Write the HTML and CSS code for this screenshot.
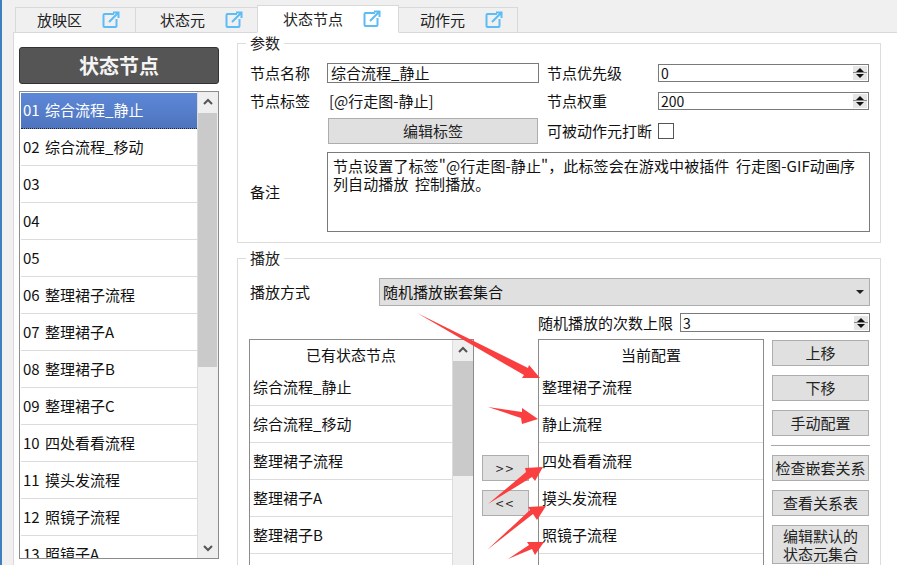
FILE: index.html
```html
<!DOCTYPE html>
<html lang="zh">
<head>
<meta charset="utf-8">
<title>状态节点</title>
<link rel="stylesheet" href="styles.css">
</head>
<body>
<div class="app">
  <nav class="tabs">
    <div class="tab t1"><span>放映区</span><svg class="ext" viewBox="0 0 18 18"><path d="M12 3H2.500A1 1 0 0 0 1.500 4v11a1 1 0 0 0 1 1h11a1 1 0 0 0 1-1V8M7 11 16 2M11 1.500h5.500V7" /></svg></div>
    <div class="tab t2"><span>状态元</span><svg class="ext" viewBox="0 0 18 18"><path d="M12 3H2.500A1 1 0 0 0 1.500 4v11a1 1 0 0 0 1 1h11a1 1 0 0 0 1-1V8M7 11 16 2M11 1.500h5.500V7" /></svg></div>
    <div class="tab active"><span>状态节点</span><svg class="ext" viewBox="0 0 18 18"><path d="M12 3H2.500A1 1 0 0 0 1.500 4v11a1 1 0 0 0 1 1h11a1 1 0 0 0 1-1V8M7 11 16 2M11 1.500h5.500V7" /></svg></div>
    <div class="tab t4"><span>动作元</span><svg class="ext" viewBox="0 0 18 18"><path d="M12 3H2.500A1 1 0 0 0 1.500 4v11a1 1 0 0 0 1 1h11a1 1 0 0 0 1-1V8M7 11 16 2M11 1.500h5.500V7" /></svg></div>
  </nav>
  <main class="panel">
    <aside class="side">
      <h1 class="title">状态节点</h1>
      <div class="list">
        <ul class="rows">
          <li class="sel">01 综合流程_静止</li>
          <li>02 综合流程_移动</li>
          <li>03</li>
          <li>04</li>
          <li>05</li>
          <li>06 整理裙子流程</li>
          <li>07 整理裙子A</li>
          <li>08 整理裙子B</li>
          <li>09 整理裙子C</li>
          <li>10 四处看看流程</li>
          <li>11 摸头发流程</li>
          <li>12 照镜子流程</li>
          <li>13 照镜子A</li>
        </ul>
        <div class="sbar">
          <div class="sup"><svg viewBox="0 0 12 8"><path d="M2 6 6 2l4 4"/></svg></div>
          <div class="thumb"></div>
          <div class="sdown"><svg viewBox="0 0 12 8"><path d="M2 2l4 4 4-4"/></svg></div>
        </div>
      </div>
    </aside>
    <div class="content">
      <section class="group params">
        <h2 class="legend">参数</h2>
        <div class="pgrid">
          <label class="lb">节点名称</label>
          <div class="field">综合流程_静止</div>
          <label class="lb">节点优先级</label>
          <div class="spin"><span>0</span><i class="arrows"><b class="u"></b><b class="d"></b></i></div>

          <label class="lb">节点标签</label>
          <div class="tagtext">[@行走图-静止]</div>
          <label class="lb">节点权重</label>
          <div class="spin"><span>200</span><i class="arrows"><b class="u"></b><b class="d"></b></i></div>

          <span></span>
          <div class="btn editbtn">编辑标签</div>
          <label class="lb">可被动作元打断</label>
          <i class="check"></i>
        </div>
        <div class="noteline">
          <label class="lb">备注</label>
          <div class="note">节点设置了标签"@行走图-静止"，此标签会在游戏中被插件 行走图-GIF动画序<br>列自动播放 控制播放。</div>
        </div>
      </section>
      <section class="group play">
        <h2 class="legend">播放</h2>
        <div class="modeline">
          <label class="lb">播放方式</label>
          <div class="combo"><span>随机播放嵌套集合</span><i class="caret"></i></div>
        </div>
        <div class="limitline">
          <label class="lb">随机播放的次数上限</label>
          <div class="spin lim"><span>3</span><i class="arrows"><b class="u"></b><b class="d"></b></i></div>
        </div>
        <div class="lists">
          <div class="box have">
            <div class="boxmain">
              <div class="head">已有状态节点</div>
              <ul class="rows small">
                <li>综合流程_静止</li>
                <li>综合流程_移动</li>
                <li>整理裙子流程</li>
                <li>整理裙子A</li>
                <li>整理裙子B</li>
              </ul>
            </div>
            <div class="sbar">
              <div class="sup"><svg viewBox="0 0 12 8"><path d="M2 6 6 2l4 4"/></svg></div>
              <div class="thumb t2"></div>
            </div>
          </div>
          <div class="mid">
            <div class="btn mbtn">&gt;&gt;</div>
            <div class="btn mbtn">&lt;&lt;</div>
          </div>
          <div class="box cur">
            <div class="boxmain">
              <div class="head">当前配置</div>
              <ul class="rows small">
                <li>整理裙子流程</li>
                <li>静止流程</li>
                <li>四处看看流程</li>
                <li>摸头发流程</li>
                <li>照镜子流程</li>
              </ul>
            </div>
          </div>
          <div class="acts">
            <div class="btn">上移</div>
            <div class="btn">下移</div>
            <div class="btn">手动配置</div>
            <hr class="sep">
            <div class="btn">检查嵌套关系</div>
            <div class="btn">查看关系表</div>
            <div class="btn tall">编辑默认的<br>状态元集合</div>
          </div>
        </div>
      </section>
    </div>
  </main>
  <svg class="marks" viewBox="0 0 897 565" aria-hidden="true">
    <polygon points="417,313 528,368 529,365 540,378 522,378 524,375"/>
    <polygon points="488,407 522,412 522,408 538,419 522,424 521,418"/>
    <polygon points="488,504 526,472 525,468 543,467 535,481 532,477"/>
    <polygon points="487,550 530,510 528,507 546,506 537,520 533,514"/>
    <polygon points="508,559 529,545 527,542 544,542 535,555 532,549"/>
  </svg>
</div>
</body>
</html>
```
FILE: styles.css
```css
* { box-sizing: border-box; }
html, body { margin: 0; padding: 0; }
body { background: #f0f0f0; font: 15px/20px "Noto Sans CJK SC", "Noto Sans", sans-serif; color: #111; overflow: hidden; }
.app { position: relative; width: 897px; height: 565px; overflow: hidden; border-left: 2px solid #3f7fc0; padding-left: 11px; }
ul { list-style: none; margin: 0; padding: 0; }
.tabs { position: relative; z-index: 1; display: flex; align-items: flex-end; height: 33px; padding-left: 2px; }
.tab { display: flex; align-items: center; height: 26px; background: #f0f0f0; border: 1px solid #d9d9d9; color: #222; }
.t1 { width: 121px; padding-left: 21px; }
.t2 { width: 123px; padding-left: 24px; margin-left: -1px; }
.t4 { width: 120px; padding-left: 21px; margin-left: -1px; }
.tab.active { width: 142px; height: 28px; background: #fff; border-bottom-color: #fff; padding-left: 25px; margin-left: -1px; position: relative; z-index: 1; }
.ext { width: 18px; height: 18px; margin-left: 20px; fill: none; stroke: #5cbcf5; stroke-width: 2; }
.panel { display: flex; background: #fff; height: 533px; margin-top: -1px; border-top: 1px solid #d9d9d9; border-left: 1px solid #d9d9d9; padding: 14px 0 0 5px; }
.side { width: 200px; flex: none; }
.title { margin: 0; height: 37px; background: #555; border: 1px solid #333; border-radius: 3px; color: #f4f4f4; font-size: 20px; line-height: 35px; font-weight: 700; text-align: center; }
.list { display: flex; height: 468px; margin-top: 7px; border: 1px solid #8c8c8c; padding-left: 1px; }
.list .rows { word-spacing: 2px; }
.rows { flex: 1; overflow: hidden; }
.rows li { height: 37px; line-height: 35px; padding-left: 2px; border-bottom: 1px solid #dcdcdc; white-space: nowrap; color: #111; }
.rows li.sel { height: 36px; margin-top: 1px; line-height: 34px; background: linear-gradient(#5d88d8, #4e74bd); color: #fff; border-bottom: 1px dotted #223; }
.sbar { display: flex; flex-direction: column; width: 21px; flex: none; background: #efefef; border-left: 1px solid #dcdcdc; }
.sup, .sdown { height: 20px; flex: none; display: flex; align-items: center; justify-content: center; }
.sup svg, .sdown svg { width: 12px; height: 8px; fill: none; stroke: #555; stroke-width: 2; }
.thumb { height: 254px; margin: 1px 1px 0 0; background: #cacaca; }
.thumb.t2 { height: 115px; }
.list .sdown { margin-top: auto; }
.content { margin-left: 18px; width: 644px; flex: none; }
.group { border: 1px solid #dcdcdc; position: relative; }
.params { height: 200px; margin-top: -4px; padding: 15px 0 0 12px; }
.play { height: 400px; margin-top: 15px; padding: 19px 0 0 12px; }
.legend { position: absolute; left: 8px; top: -11px; margin: 0; padding: 0 4px; background: #fff; font-size: 15px; font-weight: 400; line-height: 20px; color: #222; }
.lb { white-space: nowrap; color: #111; }
.pgrid { display: grid; grid-template-columns: 77px 220px 111px 211px; grid-template-rows: 28px 27px 34px; align-items: center; }
.field { width: 212px; height: 20px; line-height: 18px; border: 1px solid #7a7a7a; padding-left: 3px; }
.tagtext { padding-left: 2px; }
.spin { display: flex; align-items: center; justify-content: space-between; height: 18px; border: 1px solid #7a7a7a; padding-left: 2px; font-size: 14px; }
.arrows { display: flex; flex-direction: column; width: 14px; height: 14px; margin-right: 1px; background: linear-gradient(#e6e6e6 6px, #888 6px, #888 7px, #e6e6e6 7px); gap: 2px; justify-content: center; align-items: center; }
.arrows b { width: 0; height: 0; border-left: 4px solid transparent; border-right: 4px solid transparent; }
.arrows .u { border-bottom: 4px solid #111; }
.arrows .d { border-top: 4px solid #111; }
.btn { display: flex; align-items: center; justify-content: center; text-align: center; height: 26px; background: #e0e0e0; border: 1px solid #adadad; color: #222; }
.editbtn { width: 210px; margin-left: 1px; }
.check { width: 16px; height: 16px; border: 1px solid #555; background: #fff; }
.noteline { display: flex; align-items: center; margin-top: 4px; }
.noteline .lb { width: 77px; }
.note { width: 543px; height: 80px; border: 1px solid #7a7a7a; padding: 4px 5px; line-height: 18px; letter-spacing: 0.1px; word-spacing: 3px; white-space: nowrap; }
.modeline { display: flex; align-items: center; height: 28px; }
.modeline .lb { width: 129px; }
.combo { display: flex; align-items: center; justify-content: space-between; width: 491px; height: 28px; background: #e0e0e0; border: 1px solid #adadad; padding: 0 5px 0 3px; }
.caret { width: 0; height: 0; border-left: 4px solid transparent; border-right: 4px solid transparent; border-top: 4px solid #222; }
.limitline { display: flex; justify-content: flex-end; align-items: center; width: 620px; height: 19px; gap: 7px; margin-top: 7px; }
.lim { width: 190px; height: 19px; }
.lists { display: flex; margin: 7px 0 0 -1px; }
.box { display: flex; flex: none; border: 1px solid #8c8c8c; border-bottom: 0; height: 230px; overflow: hidden; }
.have { width: 225px; }
.cur { width: 226px; }
.boxmain { flex: 1; min-width: 0; }
.head { height: 29px; line-height: 30px; text-align: center; color: #111; }
.small li { padding-left: 3px; }
.mid { width: 64px; flex: none; display: flex; flex-direction: column; gap: 9px; padding: 116px 0 0 8px; }
.mbtn { width: 47px; font-size: 14px; letter-spacing: 2px; }
.acts { width: 97px; flex: none; margin-left: 8px; padding-top: 1px; display: flex; flex-direction: column; gap: 9px; }
.acts .btn { width: 97px; flex: none; }
.sep { width: 99px; margin: 0 0 0 -1px; border: 0; border-top: 1px solid #a8a8a8; }
.acts .tall { height: 39px; line-height: 18px; }
.marks { position: absolute; left: -2px; top: 0; width: 897px; height: 565px; fill: #f93f3f; pointer-events: none; z-index: 2; }
```
